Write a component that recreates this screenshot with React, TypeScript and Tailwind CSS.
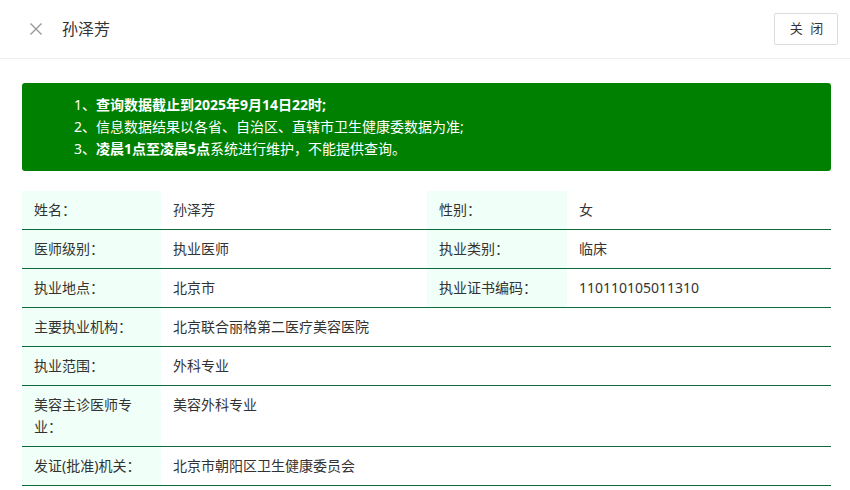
import React from "react";

type Row = { label: string; value: string; label2?: string; value2?: string };

const rows: Row[] = [
  { label: "姓名：", value: "孙泽芳", label2: "性别：", value2: "女" },
  { label: "医师级别：", value: "执业医师", label2: "执业类别：", value2: "临床" },
  { label: "执业地点：", value: "北京市", label2: "执业证书编码：", value2: "110110105011310" },
  { label: "主要执业机构：", value: "北京联合丽格第二医疗美容医院" },
  { label: "执业范围：", value: "外科专业" },
  { label: "美容主诊医师专业：", value: "美容外科专业" },
  { label: "发证(批准)机关：", value: "北京市朝阳区卫生健康委员会" },
];

const labelCls = "bg-[#f0fff7] px-3 py-2 leading-[22px] border-b border-[#0b6b3a] text-[#333]";
const valueCls = "px-3 py-2 leading-[22px] border-b border-[#0b6b3a] text-[#333]";

export default function App() {
  return (
    <div
      className="w-[850px] h-[490px] bg-white overflow-hidden"
      style={{ fontFamily: '"Noto Sans", "Noto Sans CJK SC", sans-serif' }}
    >
      {/* Header */}
      <div className="h-[59px] flex items-center justify-between border-b border-[#eeeeee] pl-[29px] pr-[12px]">
        <div className="flex items-center gap-[19px]">
          <svg className="w-[14px] h-[14px]" viewBox="0 0 14 14" fill="none" stroke="#999" strokeWidth={1.4}>
            <path d="M1.5 1.5l11 11M12.5 1.5l-11 11" />
          </svg>
          <span className="text-[16px] text-[#333]">孙泽芳</span>
        </div>
        <button className="w-[64px] h-[32px] border border-[#dcdcdc] rounded-[2px] text-[13px] text-[#333] tracking-[2px] pl-[3px] bg-white">
          关 闭
        </button>
      </div>

      <div className="pl-[22px] pr-[19px] pt-[24px]">
        {/* Notice */}
        <div className="bg-[#008000] rounded-[3px] text-white text-[14px] leading-[22px] pl-[52px] py-[11px]">
          <div>
            1、<span className="font-bold">查询数据截止到2025年9月14日22时;</span>
          </div>
          <div>2、信息数据结果以各省、自治区、直辖市卫生健康委数据为准;</div>
          <div>
            3、<span className="font-bold">凌晨1点至凌晨5点</span>系统进行维护，不能提供查询。
          </div>
        </div>

        {/* Table */}
        <div className="mt-[20px] grid grid-cols-[139px_266px_140px_1fr] text-[14px]">
          {rows.map((r) =>
            r.label2 ? (
              <React.Fragment key={r.label}>
                <div className={labelCls}>{r.label}</div>
                <div className={valueCls}>{r.value}</div>
                <div className={labelCls}>{r.label2}</div>
                <div className={valueCls}>{r.value2}</div>
              </React.Fragment>
            ) : (
              <React.Fragment key={r.label}>
                <div className={labelCls}>{r.label}</div>
                <div className={`${valueCls} col-span-3`}>{r.value}</div>
              </React.Fragment>
            )
          )}
        </div>
      </div>
    </div>
  );
}
